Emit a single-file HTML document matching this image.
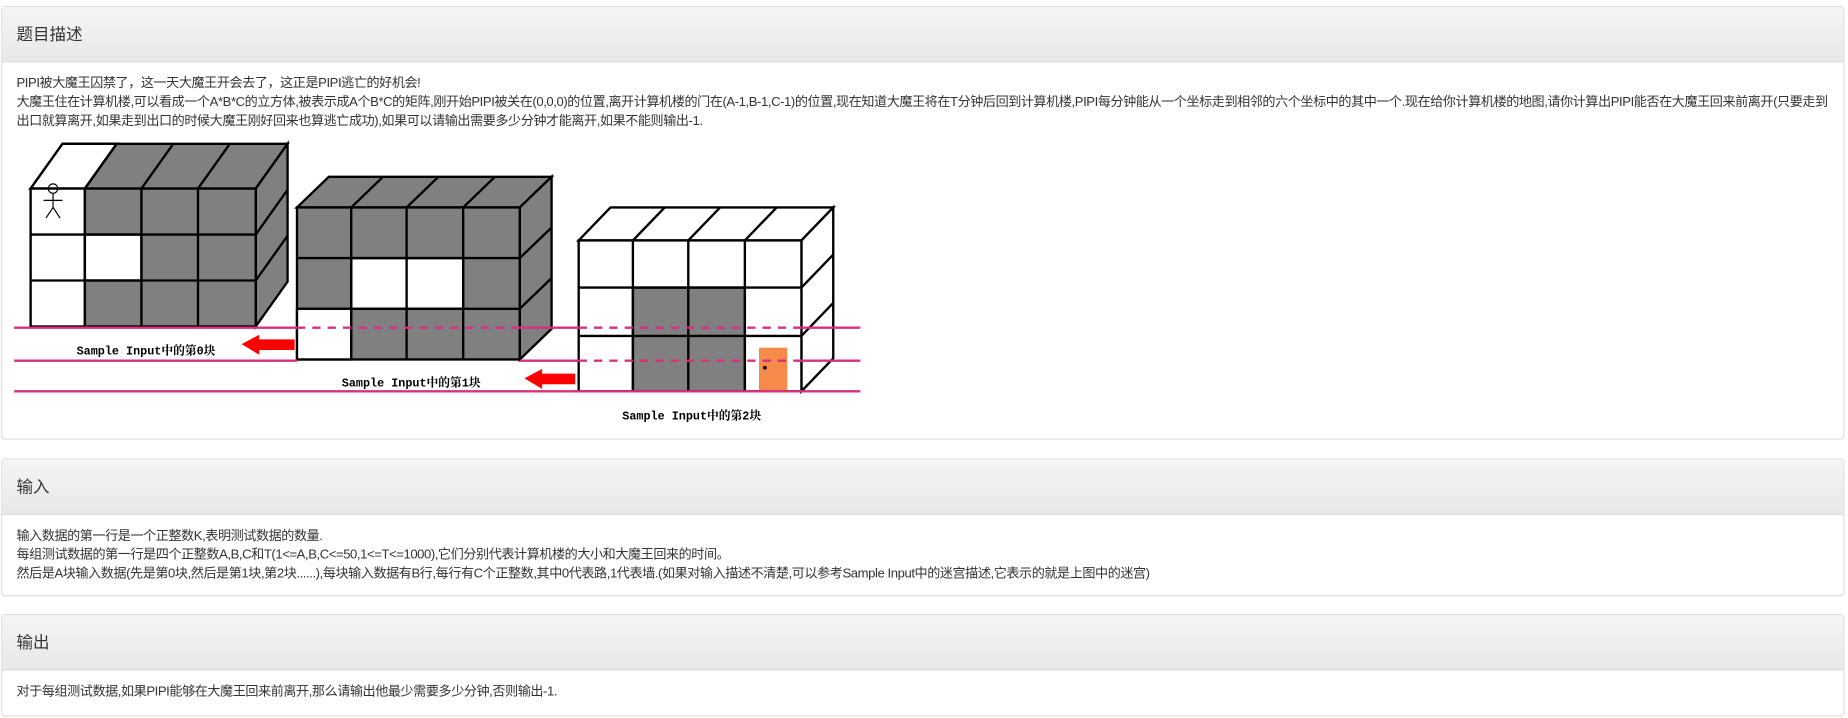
<!DOCTYPE html>
<html><head><meta charset="utf-8"><style>
body{margin:0;background:#fff;font-family:"Liberation Sans","Noto Sans CJK SC",sans-serif;color:#333;width:1848px;height:717px;position:relative;overflow:hidden}
#w{position:absolute;left:0;top:0;width:1568px;height:609px;transform:scale(1.17857);transform-origin:0 0}
.p{position:absolute;left:1px;width:1564px;border:1px solid #ddd;border-radius:3px;background:#fff;box-sizing:border-box}
.h{height:46px;background:linear-gradient(#f5f5f5,#e8e8e8);border-bottom:1px solid #ddd;font-size:14px;line-height:46px;padding-left:12px}
.b{padding:10px 12px;font-size:11.1px;line-height:16px;white-space:nowrap;letter-spacing:-0.35px}
svg{position:absolute;left:0;top:0}
</style></head><body><div id="w">
<div class="p" style="top:5px;height:368px"><div class="h">题目描述</div>
<div class="b">PIPI被大魔王囚禁了，这一天大魔王开会去了，这正是PIPI逃亡的好机会!<br>大魔王住在计算机楼,可以看成一个A*B*C的立方体,被表示成A个B*C的矩阵,刚开始PIPI被关在(0,0,0)的位置,离开计算机楼的门在(A-1,B-1,C-1)的位置,现在知道大魔王将在T分钟后回到计算机楼,PIPI每分钟能从一个坐标走到相邻的六个坐标中的其中一个.现在给你计算机楼的地图,请你计算出PIPI能否在大魔王回来前离开(只要走到<br>出口就算离开,如果走到出口的时候大魔王刚好回来也算逃亡成功),如果可以请输出需要多少分钟才能离开,如果不能则输出-1.</div></div>
<div class="p" style="top:389px;height:117px"><div class="h">输入</div>
<div class="b">输入数据的第一行是一个正整数K,表明测试数据的数量.<br>每组测试数据的第一行是四个正整数A,B,C和T(1&lt;=A,B,C&lt;=50,1&lt;=T&lt;=1000),它们分别代表计算机楼的大小和大魔王回来的时间。<br>然后是A块输入数据(先是第0块,然后是第1块,第2块......),每块输入数据有B行,每行有C个正整数,其中0代表路,1代表墙.(如果对输入描述不清楚,可以参考Sample Input中的迷宫描述,它表示的就是上图中的迷宫)</div></div>
<div class="p" style="top:521px;height:87px"><div class="h">输出</div>
<div class="b">对于每组测试数据,如果PIPI能够在大魔王回来前离开,那么请输出他最少需要多少分钟,否则输出-1.</div></div>
<svg width="1568" height="609" stroke="#000" stroke-width="2">
<g fill="#808080">
<polygon points="26,160 53,122 244,122 217,160"/>
<polygon points="26,160 53,122 99,122 72,160" fill="#fff"/>
<polygon points="217,160 244,122 244,239 217,277"/>
<rect x="26" y="160" width="191" height="117"/>
<rect x="26" y="160" width="46" height="117" fill="#fff"/>
<rect x="72" y="199" width="48" height="39" fill="#fff"/>
<path d="M72,160V277M120,160V277M168,160V277M26,199H217M26,238H217M99,122L72,160M147,122L120,160M195,122L168,160M244,161L217,199M244,200L217,238" fill="none"/>
<g stroke-width="1" fill="none"><circle cx="45" cy="160" r="4"/><path d="M45,164V176M37,170H53M45,176L39,185M45,176L51,185"/></g>
<polygon points="252,176 279,150 468,150 441,176"/>
<polygon points="441,176 468,150 468,279 441,305"/>
<rect x="252" y="176" width="189" height="129"/>
<rect x="298" y="219" width="95" height="43" fill="#fff"/>
<rect x="252" y="262" width="46" height="43" fill="#fff"/>
<path d="M298,176V305M345,176V305M393,176V305M252,219H441M252,262H441M325,150L298,176M372,150L345,176M420,150L393,176M468,193L441,219M468,236L441,262" fill="none"/>
<polygon points="491,204 518,176 707,176 680,204" fill="#fff"/>
<polygon points="680,204 707,176 707,304 680,332" fill="#fff"/>
<rect x="491" y="204" width="189" height="128" fill="#fff"/>
<rect x="537" y="244" width="95" height="88"/>
<path d="M537,204V332M584,204V332M632,204V332M491,244H680M491,285H680M564,176L537,204M611,176L584,204M659,176L632,204M707,216L680,244M707,257L680,285" fill="none"/>
<rect x="644" y="295" width="24" height="36" fill="#f58a4a" stroke="none"/>
<circle cx="649" cy="312" r="1.6" fill="#000" stroke="none"/>
</g>
<g stroke="#d8307a" stroke-width="2" fill="none">
<path d="M12,278H252M441,278H491M680,278H730M12,306H252M441,306H491M680,306H730M12,332H730"/>
<path d="M252,278H441M491,278H680M491,306H680" stroke-dasharray="7,6"/>
</g>
<g fill="#f00" stroke="none">
<polygon points="205,292 220,284 220,288 250,288 250,297 220,297 220,301"/>
<polygon points="445,321 460,313 460,317 488,317 488,326 460,326 460,330"/>
</g>
<g font-family="Liberation Mono,Noto Serif CJK SC,monospace" font-size="10" font-weight="bold" fill="#000" stroke="none">
<text x="65" y="301">Sample Input中的第0块</text>
<text x="290" y="328">Sample Input中的第1块</text>
<text x="528" y="356">Sample Input中的第2块</text>
</g>
</svg>
</div></body></html>
